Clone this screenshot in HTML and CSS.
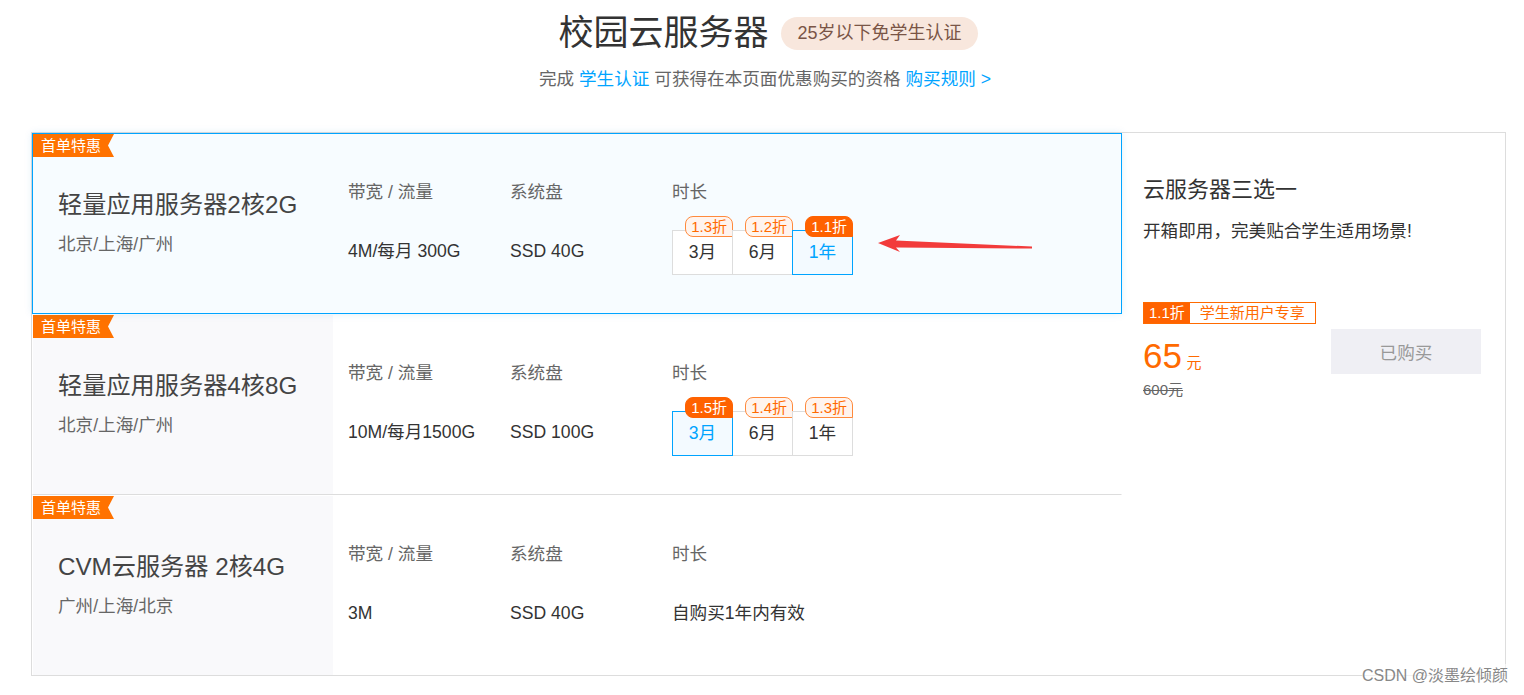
FILE: index.html
```html
<!DOCTYPE html>
<html lang="zh-CN">
<head>
    <meta charset="UTF-8">
    <title>校园云服务器</title>
    <link rel="stylesheet" href="styles.css">
</head>
<body>
    <div class="header">
        <div class="title-line">
            <h1>校园云服务器</h1>
            <span class="pill">25岁以下免学生认证</span>
        </div>
        <p class="sub">完成 <a href="#">学生认证</a> 可获得在本页面优惠购买的资格 <a href="#">购买规则 &gt;</a></p>
    </div>

    <div class="board">
        <div class="plans">
            <div class="plan active">
                <span class="tag">首单特惠</span>
                <div class="plan-name">
                    <div class="name">轻量应用服务器2核2G</div>
                    <div class="region">北京/上海/广州</div>
                </div>
                <div class="col">
                    <div class="label">带宽 / 流量</div>
                    <div class="value">4M/每月 300G</div>
                </div>
                <div class="col">
                    <div class="label">系统盘</div>
                    <div class="value">SSD 40G</div>
                </div>
                <div class="col col-time">
                    <div class="label">时长</div>
                    <div class="periods">
                        <div class="period"><span class="off">1.3折</span>3月</div>
                        <div class="period"><span class="off">1.2折</span>6月</div>
                        <div class="period on"><span class="off">1.1折</span>1年</div>
                    </div>
                </div>
            </div>

            <div class="plan">
                <span class="tag">首单特惠</span>
                <div class="plan-name">
                    <div class="name">轻量应用服务器4核8G</div>
                    <div class="region">北京/上海/广州</div>
                </div>
                <div class="col">
                    <div class="label">带宽 / 流量</div>
                    <div class="value">10M/每月1500G</div>
                </div>
                <div class="col">
                    <div class="label">系统盘</div>
                    <div class="value">SSD 100G</div>
                </div>
                <div class="col col-time">
                    <div class="label">时长</div>
                    <div class="periods">
                        <div class="period on"><span class="off">1.5折</span>3月</div>
                        <div class="period"><span class="off">1.4折</span>6月</div>
                        <div class="period"><span class="off">1.3折</span>1年</div>
                    </div>
                </div>
            </div>

            <div class="plan">
                <span class="tag">首单特惠</span>
                <div class="plan-name">
                    <div class="name">CVM云服务器 2核4G</div>
                    <div class="region">广州/上海/北京</div>
                </div>
                <div class="col">
                    <div class="label">带宽 / 流量</div>
                    <div class="value">3M</div>
                </div>
                <div class="col">
                    <div class="label">系统盘</div>
                    <div class="value">SSD 40G</div>
                </div>
                <div class="col col-time">
                    <div class="label">时长</div>
                    <div class="value">自购买1年内有效</div>
                </div>
            </div>
        </div>

        <div class="buy">
            <h2>云服务器三选一</h2>
            <p class="desc">开箱即用，完美贴合学生适用场景!</p>
            <div class="deal"><span class="deal-off">1.1折</span><span class="deal-text">学生新用户专享</span></div>
            <div class="price-row">
                <div class="price">
                    <div><span class="num">65</span> <span class="unit">元</span></div>
                    <div class="orig">600元</div>
                </div>
                <button class="bought">已购买</button>
            </div>
        </div>
    </div>

    <!-- annotation arrow from the screenshot -->
    <svg class="arrow" width="170" height="24" viewBox="870 232 170 24">
        <polygon points="878,243 900,235 896,240.5 1032,246.5 1032,248.5 896,247.5 900,252" fill="#f23b3b"/>
    </svg>

    <div class="mark">CSDN @淡墨绘倾颜</div>
</body>
</html>
```

FILE: styles.css
```css
body {
    margin: 0;
    font-family: "Liberation Sans", "Noto Sans CJK SC", sans-serif;
    color: #333;
    background: #fff;
    position: relative;
    height: 695px;
    overflow: hidden;
}
.header {
    padding-top: 11px;
    text-align: center;
}
.title-line {
    display: flex;
    justify-content: center;
    align-items: center;
    gap: 13px;
    margin-left: 12px;
}
h1 {
    margin: 0;
    font-size: 35px;
    font-weight: normal;
    line-height: 44px;
    color: #333;
}
.pill {
    background: #f8e7dd;
    color: #7a5546;
    font-size: 18px;
    line-height: 33px;
    padding: 0 16px;
    border-radius: 17px;
}
.sub {
    margin: 12px 0 0 6px;
    font-size: 17.6px;
    line-height: 24px;
    color: #666;
}
.sub a {
    color: #00a4ff;
    text-decoration: none;
}

.board {
    display: flex;
    margin: 41px 0 0 31px;
    width: 1475px;
    height: 544px;
    border: 1px solid #ddd;
    box-sizing: border-box;
}
.plans {
    width: 1090px;
    flex: none;
}
.plan {
    position: relative;
    display: flex;
    height: 181px;
    border: 1px solid transparent;
    border-bottom-color: #ddd;
    box-sizing: border-box;
}
.plan:last-child { border-bottom-color: transparent; }
.plan.active {
    background: #f7fcff;
    border-color: #00a4ff;
    box-shadow: 0 0 8px rgba(0, 120, 200, 0.12);
    z-index: 1;
}
.tag {
    position: absolute;
    left: 0;
    top: 0;
    width: 81px;
    height: 23px;
    line-height: 23px;
    padding-left: 8px;
    box-sizing: border-box;
    background: #ff7200;
    color: #fff;
    font-size: 15px;
    clip-path: polygon(0 0, 100% 0, calc(100% - 6px) 50%, 100% 100%, 0 100%);
}
.plan-name {
    width: 300px;
    flex: none;
    background: #f9f9fb;
    padding: 55px 0 0 25px;
    box-sizing: border-box;
}
.plan.active .plan-name { background: transparent; }
.name {
    font-size: 24.2px;
    line-height: 32px;
    color: #444;
}
.region {
    margin-top: 10px;
    font-size: 17.6px;
    line-height: 26px;
    color: #666;
}
.col {
    width: 162px;
    flex: none;
    padding: 45px 0 0 15px;
    box-sizing: border-box;
}
.col-time { width: auto; }
.label {
    font-size: 17.6px;
    line-height: 26px;
    color: #666;
}
.value {
    margin-top: 33px;
    font-size: 17.6px;
    line-height: 26px;
    color: #333;
}
.periods {
    display: flex;
    margin-top: 25px;
}
.period {
    position: relative;
    width: 61px;
    height: 45px;
    line-height: 43px;
    text-align: center;
    font-size: 17.6px;
    color: #333;
    border: 1px solid #ddd;
    box-sizing: border-box;
    background: #fff;
}
.period + .period { margin-left: -1px; }
.period.on {
    border-color: #00a4ff;
    color: #00a4ff;
    background: #f3faff;
    z-index: 1;
}
.off {
    position: absolute;
    right: -1px;
    top: -15px;
    height: 21px;
    line-height: 20px;
    padding: 0 5px;
    font-size: 15px;
    color: #ff6a00;
    background: #fff4ee;
    border: 1px solid #ff8a3d;
    border-radius: 8px 8px 0 8px;
    box-sizing: border-box;
}
.period.on .off {
    background: #ff6200;
    border-color: #ff6200;
    color: #fff;
}

.buy {
    flex: 1;
    padding: 41px 24px 0 21px;
}
.buy h2 {
    margin: 0;
    font-size: 22px;
    font-weight: normal;
    line-height: 32px;
    color: #333;
}
.desc {
    margin: 12px 0 0;
    font-size: 17.6px;
    line-height: 26px;
    color: #333;
}
.deal {
    display: inline-flex;
    margin-top: 58px;
    height: 22px;
    border: 1px solid #ff6a00;
    box-sizing: border-box;
    font-size: 15px;
    line-height: 20px;
}
.deal-off {
    background: #ff6200;
    color: #fff;
    padding: 0 5px;
}
.deal-text {
    color: #ff6a00;
    padding: 0 10px;
}
.price-row {
    display: flex;
    justify-content: space-between;
    align-items: flex-start;
    margin-top: 5px;
}
.price { padding-top: 5px; }
.num {
    font-size: 35px;
    line-height: 44px;
    color: #ff6a00;
}
.unit {
    font-size: 15px;
    color: #ff6a00;
}
.orig {
    margin-top: 2px;
    font-size: 15px;
    line-height: 20px;
    color: #666;
    text-decoration: line-through;
}
.bought {
    width: 150px;
    height: 45px;
    border: none;
    background: #efeff4;
    color: #999;
    font-size: 17.6px;
    font-family: inherit;
}

.arrow {
    position: absolute;
    left: 870px;
    top: 232px;
    z-index: 5;
}
.mark {
    position: absolute;
    right: 16px;
    top: 664px;
    font-size: 16px;
    line-height: 24px;
    color: #888;
    background: rgba(255, 255, 255, 0.6);
    z-index: 5;
}
```
